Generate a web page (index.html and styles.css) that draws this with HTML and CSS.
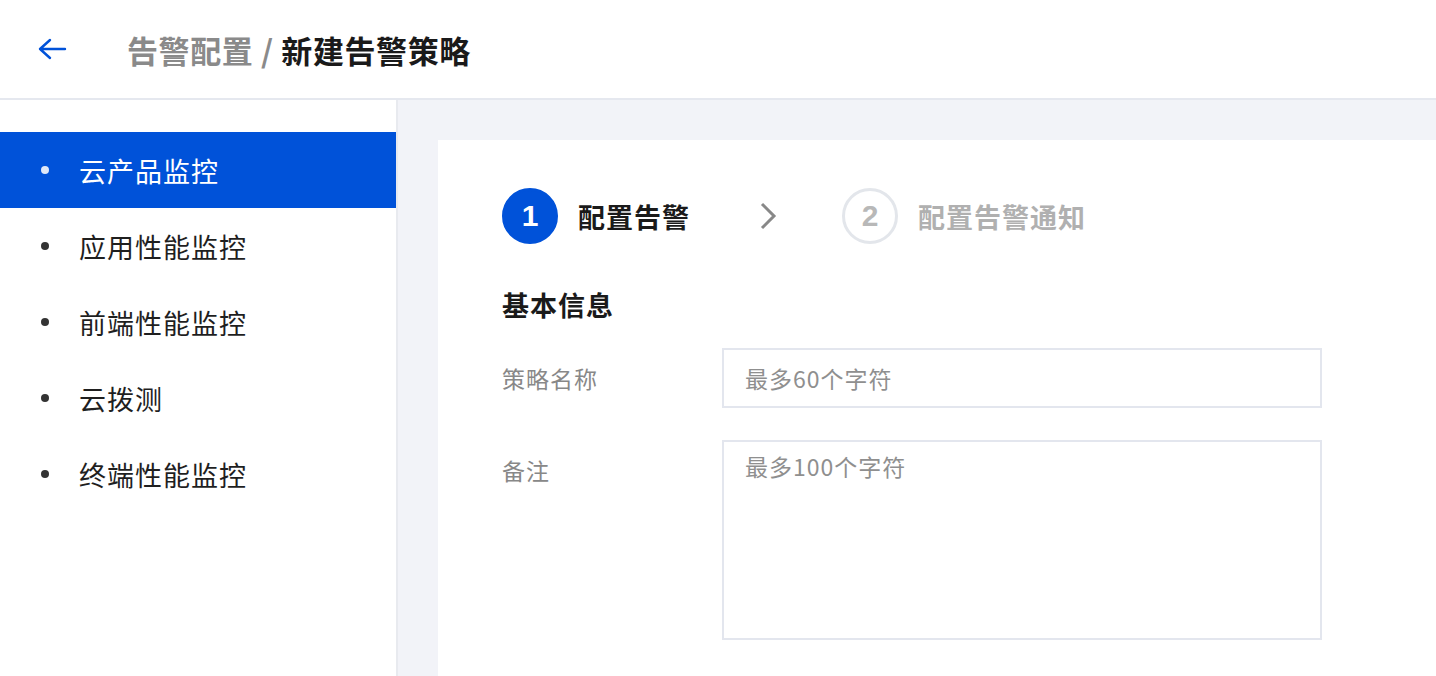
FILE: index.html
```
<!DOCTYPE html>
<html lang="zh-CN">
<head>
<meta charset="utf-8">
<title>新建告警策略</title>
<link rel="stylesheet" href="styles.css">
</head>
<body>

<header class="topbar">
	<a class="back" href="#">
		<svg width="30" height="24" viewBox="0 0 30 24"><path d="M13 3 L3 12 L13 21 M3 12 H28" fill="none" stroke="#0052d9" stroke-width="2.4" stroke-linecap="round" stroke-linejoin="round"/></svg>
	</a>
	<h1 class="crumb"><span class="crumb-parent">告警配置 / </span>新建告警策略</h1>
</header>

<div class="layout">
	<ul class="menu">
		<li class="menu-item active">云产品监控</li>
		<li class="menu-item">应用性能监控</li>
		<li class="menu-item">前端性能监控</li>
		<li class="menu-item">云拨测</li>
		<li class="menu-item">终端性能监控</li>
	</ul>

	<main class="main">
		<div class="card">
			<div class="steps">
				<div class="step current"><span class="step-num">1</span><span class="step-text">配置告警</span></div>
				<svg class="step-arrow" width="18" height="28" viewBox="0 0 18 28"><path d="M3 2 L15 14 L3 26" fill="none" stroke="#888" stroke-width="3"/></svg>
				<div class="step"><span class="step-num">2</span><span class="step-text">配置告警通知</span></div>
			</div>

			<h2 class="section-title">基本信息</h2>

			<div class="field">
				<label class="field-label">策略名称</label>
				<input class="input" type="text" placeholder="最多60个字符">
			</div>
			<div class="field">
				<label class="field-label">备注</label>
				<textarea class="input textarea" placeholder="最多100个字符"></textarea>
			</div>
		</div>
	</main>
</div>

</body>
</html>
```

FILE: styles.css
```
html, body {
	height: 100%;
}

body {
	margin: 0;
	font-family: "Noto Sans CJK SC", "Noto Sans", sans-serif;
	color: #1a1a1a;
	background: #fff;
	overflow: hidden;
}

ul, li {
	margin: 0;
	padding: 0;
	list-style-type: none;
}

.topbar {
	height: 98px;
	display: flex;
	align-items: center;
	border-bottom: 2px solid #e5e8ef;
	box-sizing: content-box;
}

.back {
	display: flex;
	margin-left: 37px;
	width: 30px;
}

.crumb {
	margin: 0 0 0 60px;
	font-size: 31px;
	font-weight: 700;
	letter-spacing: 0.6px;
	color: #1a1a1a;
}

.crumb-parent {
	color: #8a8a8a;
}

.layout {
	display: flex;
	height: calc(100% - 100px);
}

.menu {
	width: 396px;
	flex-shrink: 0;
	padding-top: 32px;
	border-right: 2px solid #e8eaef;
	background: #fff;
}

.menu-item {
	height: 76px;
	display: flex;
	align-items: center;
	padding-left: 79px;
	position: relative;
	font-size: 27px;
	letter-spacing: 1px;
	color: #1f1f1f;
}

.menu-item:before {
	content: '';
	position: absolute;
	left: 41px;
	top: 34px;
	width: 8px;
	height: 8px;
	border-radius: 50%;
	background: #333;
}

.menu-item.active {
	background: #0052d9;
	color: #fff;
}

.menu-item.active:before {
	background: #dfe8f8;
}

.main {
	flex: 1;
	background: #f2f3f8;
	padding: 40px 0 0 40px;
}

.card {
	background: #fff;
	height: 100%;
	padding: 48px 0 0 64px;
	box-sizing: border-box;
}

.steps {
	display: flex;
	align-items: center;
	height: 56px;
}

.step {
	display: flex;
	align-items: center;
}

.step-num {
	width: 56px;
	height: 56px;
	box-sizing: border-box;
	border-radius: 50%;
	border: 3px solid #e3e6eb;
	display: flex;
	align-items: center;
	justify-content: center;
	font-family: "Liberation Sans", Arial, sans-serif;
	font-size: 30px;
	font-weight: 700;
	color: #b8b8b8;
}

.step-text {
	margin-left: 20px;
	font-size: 27px;
	font-weight: 700;
	letter-spacing: 1px;
	color: #b0b0b0;
}

.step.current .step-num {
	background: #0052d9;
	border-color: #0052d9;
	color: #fff;
}

.step.current .step-text {
	color: #1a1a1a;
}

.step-arrow {
	margin: 0 65px 0 69px;
}

.section-title {
	margin: 42px 0 0;
	font-size: 27px;
	font-weight: 700;
	letter-spacing: 1px;
	line-height: 38px;
}

.field {
	display: flex;
	align-items: flex-start;
	margin-top: 24px;
}

.field + .field {
	margin-top: 32px;
}

.field-label {
	width: 220px;
	flex-shrink: 0;
	font-size: 23px;
	letter-spacing: 1px;
	line-height: 60px;
	color: #888;
}

.input {
	width: 600px;
	height: 60px;
	box-sizing: border-box;
	border: 2px solid #e3e6ee;
	padding: 0 21px;
	font-family: inherit;
	font-size: 23px;
	letter-spacing: 1px;
	color: #1a1a1a;
	outline: none;
}

.input::placeholder {
	color: #8f8f8f;
}

.textarea {
	height: 200px;
	padding-top: 8px;
	resize: none;
	line-height: 32px;
}
```
